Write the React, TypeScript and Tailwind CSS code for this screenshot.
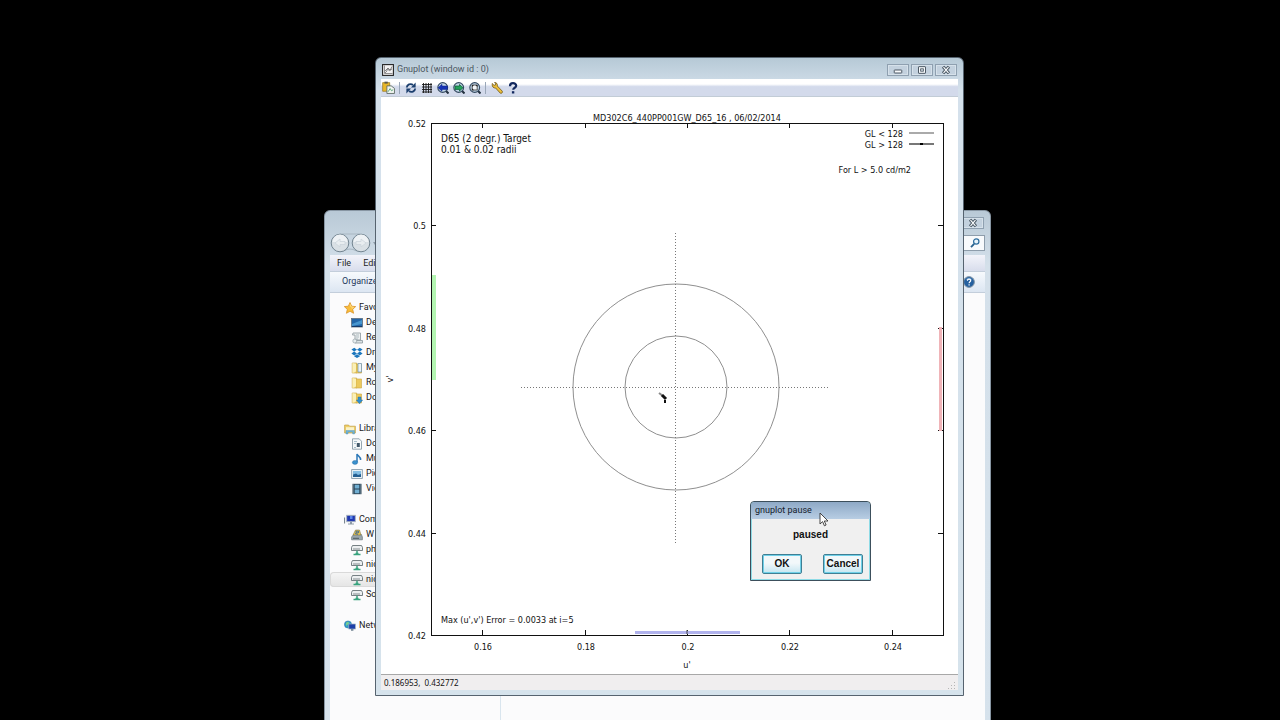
import React from 'react';

const UI_FONT = "font-['Roboto','Noto_Sans',sans-serif]";

// ---------------------------------------------------------------- icons

interface IconProps {
  className?: string;
  children?: React.ReactNode;
}

function Icon({ className = 'size-3', children }: IconProps) {
  return (
    <svg viewBox="0 0 12 12" className={`block shrink-0 ${className}`} fill="none" aria-hidden="true">
      {children}
    </svg>
  );
}

const StarIcon = () => (
  <Icon>
    <path d="M6 .5 7.7 4.2l4 .4-3 2.7.9 4L6 9.3l-3.6 2 .9-4-3-2.7 4-.4z" fill="#f9bd3a" stroke="#d48a1c" strokeWidth=".7" />
    <path d="M6 2.2 7 5l2.6.3-2 1.6" stroke="#ffe79a" strokeWidth=".7" />
  </Icon>
);

const DesktopIcon = () => (
  <Icon>
    <rect x=".5" y="1.5" width="11" height="8.5" fill="#2265a8" stroke="#5d6f80" strokeWidth=".8" />
    <path d="M1 7 11 3v4L1 9z" fill="#4796cf" />
    <path d="M1 9.5h10" stroke="#173a66" />
  </Icon>
);

const RecentIcon = () => (
  <Icon>
    <path d="M2 1h7.5v7H4V3H1.5z" fill="#eef1f2" stroke="#8b979d" strokeWidth=".8" />
    <path d="M5 3h3M5 5h3M5 7h2" stroke="#93a5ae" strokeWidth=".7" />
    <path d="M4 8.5h7.5V11H4z" fill="#dbe2e5" stroke="#8b979d" strokeWidth=".8" />
    <circle cx="3.8" cy="9" r="2" fill="#e6ecee" stroke="#8b979d" strokeWidth=".6" />
  </Icon>
);

const DropboxIcon = () => (
  <Icon>
    <path d="M3.3.8 6 2.7 3.1 4.6.4 2.6zM8.7.8 6 2.7l2.9 1.9 2.7-2zM.4 6.5l2.7-1.9L6 6.5 3.3 8.4zM11.6 6.5 8.9 4.6 6 6.5l2.7 1.9zM3 9.2l3-2 3 2-3 1.9z" fill="#1c76bd" />
  </Icon>
);

const FolderIcon = ({ badge }: { badge?: 'doc' | 'down' }) => (
  <Icon>
    <path d="M1.2 1h4.5v10H1.2z" fill="#f5df86" stroke="#c9a542" strokeWidth=".6" />
    <path d="M5 2h5.5v9H5z" fill="#ecc95c" stroke="#c9a542" strokeWidth=".6" />
    <path d="M1.5 11 5 9.5V2L1.5 1z" fill="#fbf0b6" />
    {badge === 'doc' && <path d="M7 1.5h3.5v8.5H7z" fill="#e9f1f7" stroke="#6b8fae" strokeWidth=".7" />}
    {badge === 'down' && <path d="M7 5h3v3h1.7L8.5 11.7 5.3 8H7z" fill="#2f8fce" stroke="#26659a" strokeWidth=".4" />}
  </Icon>
);

const LibraryIcon = () => (
  <Icon>
    <path d="M.6 2h4l1 1.2h5.8V10H.6z" fill="#f0cf68" stroke="#b99639" strokeWidth=".6" />
    <path d="M2 4.2h8v4H2z" fill="#fbf3c8" />
    <path d="M2 11V7.5h8.5V11H8.7V9H4v2z" fill="#70b3d5" stroke="#4b8db1" strokeWidth=".4" />
  </Icon>
);

const DocumentIcon = () => (
  <Icon>
    <path d="M1.5.8h6.7l2.3 2.4v8H1.5z" fill="#f6f9fa" stroke="#7e929e" strokeWidth=".8" />
    <path d="M3 3.5h3M3 5.5h2M3 9.5h2" stroke="#87a6b6" strokeWidth=".7" />
    <path d="M5.8 5h3v4h-3z" fill="#41586a" />
  </Icon>
);

const MusicIcon = () => (
  <Icon>
    <path d="M6 9V1c.6 2 3.8 2.3 3.6 6" stroke="#2c78b8" strokeWidth="1.5" />
    <ellipse cx="4" cy="9.4" rx="2.7" ry="2" fill="#3a90cc" stroke="#2467a1" strokeWidth=".4" />
  </Icon>
);

const PictureIcon = () => (
  <Icon>
    <path d="M.6 1.5h10.8v9H.6z" fill="#eaf2f7" stroke="#7d92a2" strokeWidth=".8" />
    <path d="M2 3h8v6H2z" fill="#83bde3" />
    <path d="m2 9 .1-2.5 3-1L7 7l3-1v3z" fill="#235f92" />
  </Icon>
);

const VideoIcon = () => (
  <Icon>
    <path d="M1.5.8h9v10.4h-9z" fill="#2c4456" />
    <path d="M3.7 1.8h4.6v3.6H3.7zM3.7 6.6h4.6v3.6H3.7z" fill="#70aed2" />
    <path d="M2.5 1.5v9M9.5 1.5v9" stroke="#9bb3c2" strokeWidth=".7" strokeDasharray="1 1" />
  </Icon>
);

const ComputerIcon = () => (
  <Icon>
    <path d="M.5 3.5v6" stroke="#7b8791" strokeWidth="1.2" />
    <rect x="2.7" y="1.3" width="8.6" height="6.4" fill="#2038b0" stroke="#a9b4be" strokeWidth=".9" />
    <path d="M6 2h2.5v3H6z" fill="#5c86ea" />
    <path d="M6 8h2v1.5h2v1H4v-1h2z" fill="#8e9ba5" />
  </Icon>
);

const DiskIcon = () => (
  <Icon>
    <path d="m.6 8 2-2.5h7.8l1 2.5v2.8H.6z" fill="#9aa7ac" stroke="#5d696f" strokeWidth=".6" />
    <path d="M2 6 4.5 1h4L10 6z" fill="#e8c654" stroke="#6d6433" strokeWidth=".5" />
    <path d="M5 2.2h2.5v1.6H5zM4 4.5l3 .8" stroke="#2b5d97" strokeWidth=".8" />
    <path d="M2 9.3h6" stroke="#3a474c" strokeWidth=".8" />
  </Icon>
);

const NetDriveIcon = () => (
  <Icon>
    <path d="M1.5 1.500h9l1 2v3H.5v-3z" fill="#eceff0" stroke="#687376" strokeWidth=".9" />
    <path d="M2 5h7" stroke="#6d777a" strokeWidth=".8" />
    <path d="M6 6.8v2.4M2.5 10.500h7M4.500 9.500h3" stroke="#38a37e" strokeWidth="1.500" />
  </Icon>
);

const NetworkIcon = () => (
  <Icon>
    <circle cx="4" cy="4.5" r="3.6" fill="#319bc9" stroke="#1f6fa0" strokeWidth=".5" />
    <path d="M2 3c1-1.5 3-1.2 3 0S3 5 2.3 6z" fill="#7bd08b" />
    <rect x="4.8" y="4" width="6.6" height="5" fill="#1c3fa8" stroke="#9fb2c2" strokeWidth=".7" />
    <path d="M7 9h2.4v1.8H7z" fill="#7a8b98" />
  </Icon>
);

const CloseGlyph = () => (
  <Icon className="size-[10px]">
    <path d="m2.5 2 7 8m0-8-7 8" stroke="#3f4c58" strokeWidth="3.6" />
    <path d="m3 2.6 6 6.8m0-6.8L3 9.4" stroke="#f7fafc" strokeWidth="1.6" />
  </Icon>
);

const MinimizeGlyph = () => (
  <Icon className="size-[10px]">
    <rect x="1.5" y="6" width="9" height="3.6" rx=".5" fill="#f7fafc" stroke="#3f4c58" strokeWidth="1.1" />
  </Icon>
);

const RestoreGlyph = () => (
  <Icon className="size-[10px]">
    <rect x="1.8" y="2" width="8.4" height="8" rx=".5" fill="#f7fafc" stroke="#3f4c58" strokeWidth="1.1" />
    <rect x="4.4" y="4.6" width="3.2" height="2.8" fill="#dce5ed" stroke="#3f4c58" strokeWidth="1" />
  </Icon>
);

const PlotIcon = () => (
  <Icon>
    <rect x=".6" y=".6" width="10.8" height="10.8" fill="#f4f4f4" stroke="#222" strokeWidth="1.1" />
    <path d="M2.500 1.500v8h8" stroke="#777" strokeWidth=".8" />
    <path d="M3 9c2-1 2-4 3-4S7 8 8 6.500 9.500 3 10 2.500M3 7l3-3 2 2 2-1" stroke="#555" strokeWidth=".7" />
  </Icon>
);

const CopyIcon = () => (
  <Icon className="size-[13px]">
    <path d="M.6 1.500h6.500v8H.6z" fill="#e9b829" stroke="#8d6d12" strokeWidth=".6" />
    <path d="M2.300.6h3v1.800h-3z" fill="#5d5a4b" />
    <path d="M4.500 4.500h4l3 2.300v4.700h-7z" fill="#f3f6f2" stroke="#596660" strokeWidth=".8" />
    <path d="m5.500 10 2-3 1.300 2 1.500-1" stroke="#4a9f6b" strokeWidth=".8" />
  </Icon>
);

const ReplotIcon = () => (
  <Icon>
    <path d="M1.800 5.500C2 2.800 5.500 1 8 3" stroke="#1c3f6e" strokeWidth="1.900" />
    <path d="M10.600.5v5H6z" fill="#1c3f6e" />
    <path d="M10.200 6.500C10 9.200 6.500 11 4 9" stroke="#1c3f6e" strokeWidth="1.900" />
    <path d="M1.400 11.500v-5H6z" fill="#1c3f6e" />
  </Icon>
);

const GridIcon = () => (
  <Icon>
    <path d="M2.500 1v10M5 1v10M7.500 1v10M10 1v10M1 2.500h10M1 5h10M1 7.500h10M1 10h10" stroke="#1a1a1a" strokeWidth=".9" />
  </Icon>
);

const ZoomIcon = ({ kind }: { kind: 'prev' | 'next' | 'auto' }) => (
  <Icon>
    <path d="m8.500 8.500 3 3" stroke="#23303f" strokeWidth="2" />
    <circle cx="5.700" cy="5.500" r="4.900" fill="#c3d8ea" stroke="#34495f" strokeWidth="1.100" />
    {kind === 'prev' && <path d="m1 5.700 4-3.500v1.800h5.500v3.400H5v1.800z" fill="#1733b4" stroke="#0d2384" strokeWidth=".5" />}
    {kind === 'next' && <path d="M10 5.700 6.500 2.500v1.500H2v3.400h4.500v1.600z" fill="#23a25b" stroke="#12633a" strokeWidth=".8" />}
    {kind === 'auto' && (
      <>
        <path d="M3.200 3h5v5h-5z" fill="#f4f6f8" stroke="#333" strokeWidth=".8" />
        <path d="M3 3h2L3 5zM8.400 3h-2l2 2zM3 8.200v-2l2 2z" fill="#222" />
      </>
    )}
  </Icon>
);

const WrenchIcon = () => (
  <Icon>
    <path d="M1.200 1.500 3 3.300 4.500 3 4.800 1.200 3.500.6C5.500.3 6.800 2 6.300 4l5 5.200c.5 1.500-.8 2.600-2 2L4.600 6C2.500 6.300 1 4.500 1.200 2.500z" fill="#edc03a" stroke="#6d5618" strokeWidth=".8" />
  </Icon>
);

const HelpGlyph = () => (
  <Icon>
    <path d="M3 4.200C3 1.800 4.200 1.200 6 1.200s3.200.8 3.200 2.600c0 2-3 1.900-3 4" stroke="#12295f" strokeWidth="2.200" />
    <rect x="4.900" y="9.200" width="2.400" height="2.300" fill="#12295f" />
  </Icon>
);

const SearchIcon = () => (
  <Icon className="size-[10px]">
    <path d="M5 7 1.200 11" stroke="#29628e" strokeWidth="2.200" />
    <circle cx="7.500" cy="4.200" r="3.200" fill="#e8f4fb" stroke="#2f6f9f" strokeWidth="1.500" />
  </Icon>
);

const HelpBallIcon = () => (
  <Icon>
    <circle cx="6" cy="6" r="5.400" fill="#25609f" stroke="#8598a8" strokeWidth="1" />
    <path d="M2.500 3.500a4.500 3.500 0 0 1 7 0z" fill="#78a9d6" />
    <path d="M4.400 4.800c0-2.400 3.300-2.200 3.300-.3 0 1.300-1.600 1.200-1.600 2.700M6.100 8.200v1.300" stroke="#fff" strokeWidth="1.200" />
  </Icon>
);

const NavArrows = () => (
  <svg viewBox="0 0 48 20" className="h-5 w-12 shrink-0" fill="none" aria-hidden="true">
    <path d="M10 1h20M10 18c5 1 5-2 10-2s5 3 10 2" stroke="#a9b7c2" />
    {[10, 31].map((cx) => (
      <g key={cx}>
        <circle cx={cx} cy="10" r="8.800" fill="#d9e0e5" stroke="#738591" />
        <path d={`M${cx - 7.500} 9a7.500 7.500 0 0 1 15 0z`} fill="#eef2f5" />
      </g>
    ))}
    <path d="M5 10l5-4v2.500h5v3h-5V14zM36 10l-5-4v2.500h-5v3h5V14z" fill="#e8edf0" stroke="#cbd4da" strokeWidth=".8" />
    <path d="M43 9h4l-2 3z" fill="#8d9ba7" />
  </svg>
);

// ---------------------------------------------------------------- explorer window

interface Place {
  label: string;
  icon: React.ReactNode;
  selected?: boolean;
}

const PLACES: { head: Place; items: Place[] }[] = [
  {
    head: { label: 'Favorites', icon: <StarIcon /> },
    items: [
      { label: 'Desktop', icon: <DesktopIcon /> },
      { label: 'Recent', icon: <RecentIcon /> },
      { label: 'Dropbox', icon: <DropboxIcon /> },
      { label: 'My', icon: <FolderIcon badge="doc" /> },
      { label: 'Ro', icon: <FolderIcon /> },
      { label: 'Do', icon: <FolderIcon badge="down" /> },
    ],
  },
  {
    head: { label: 'Libraries', icon: <LibraryIcon /> },
    items: [
      { label: 'Documents', icon: <DocumentIcon /> },
      { label: 'Music', icon: <MusicIcon /> },
      { label: 'Pictures', icon: <PictureIcon /> },
      { label: 'Videos', icon: <VideoIcon /> },
    ],
  },
  {
    head: { label: 'Computer', icon: <ComputerIcon /> },
    items: [
      { label: 'W', icon: <DiskIcon /> },
      { label: 'ph', icon: <NetDriveIcon /> },
      { label: 'nic', icon: <NetDriveIcon /> },
      { label: 'nic', icon: <NetDriveIcon />, selected: true },
      { label: 'So', icon: <NetDriveIcon /> },
    ],
  },
  { head: { label: 'Network', icon: <NetworkIcon /> }, items: [] },
];

function WindowButton({ label, children }: { label: string; children: React.ReactNode }) {
  return (
    <button
      type="button"
      aria-label={label}
      className="flex h-3 w-[22px] items-center justify-center border border-[#8fa0b0] bg-[#c3d1de] shadow-[inset_0_0_0_1px_#d6e1ea]"
    >
      {children}
    </button>
  );
}

function ExplorerWindow() {
  return (
    <section
      aria-label="Explorer"
      className="absolute top-[210px] left-[324px] flex h-[540px] w-[667px] flex-col rounded-t-md border border-[#8896a3] bg-linear-to-b from-[#b9c9d6] via-[#d4e0ea] via-10% to-[#d6e2ec] px-[5px]"
    >
      <div className="flex h-[19px] items-center justify-end pt-1 pr-px">
        <WindowButton label="Close explorer">
          <CloseGlyph />
        </WindowButton>
      </div>
      <div className="flex h-[25px] items-center justify-between">
        <button type="button" aria-label="Back and forward">
          <NavArrows />
        </button>
        <label className="flex h-4 w-32 items-center border border-[#8e9dab] bg-[#f8fafc] pr-1">
          <input aria-label="Search" className="min-w-0 flex-1 bg-transparent text-[9px] outline-none" />
          <SearchIcon />
        </label>
      </div>
      <nav className="flex h-4 items-center gap-3 bg-linear-to-b from-[#f3f4fa] to-[#d8ddec] px-[7px] pt-px text-[9px] text-[#1e1e1e]">
        <button type="button">File</button>
        <button type="button">Edit</button>
      </nav>
      <div className="flex h-[22px] items-center justify-between border-y border-[#c3cedb] bg-linear-to-b from-[#f7fafd] to-[#dce6f2] pr-[10px] pl-3 text-[9px] text-[#1e395b]">
        <button type="button">Organize</button>
        <button type="button" aria-label="Explorer help">
          <HelpBallIcon />
        </button>
      </div>
      <div className="flex min-h-0 flex-1 bg-[#fbfbfc]">
        <aside className="flex w-[171px] flex-col gap-4 border-r border-[#d9e5ee] pt-[7px] text-[9px] text-[#1a1a1a]">
          {PLACES.map(({ head, items }) => (
            <div key={head.label}>
              <div className="flex h-[15px] items-center gap-[3px] pl-[14px]">
                {head.icon}
                <span>{head.label}</span>
              </div>
              {items.map((item, i) => (
                <div
                  key={i}
                  className={`flex h-[15px] items-center gap-[3px] rounded-sm pl-[21px] ${
                    item.selected ? 'bg-linear-to-b from-[#f6f6f6] to-[#e4e4e4] ring-1 ring-[#d9d9d9] ring-inset' : ''
                  }`}
                >
                  {item.icon}
                  <span>{item.label}</span>
                </div>
              ))}
            </div>
          ))}
        </aside>
      </div>
    </section>
  );
}

// ---------------------------------------------------------------- chart

const PLOT = { left: 50, top: 26, right: 562, bottom: 538 };
const sx = (u: number) => Math.round(PLOT.left + ((u - 0.15) / 0.1) * (PLOT.right - PLOT.left));
const sy = (v: number) => Math.round(PLOT.top + ((0.52 - v) / 0.1) * (PLOT.bottom - PLOT.top));

const U_TICKS = [0.16, 0.18, 0.2, 0.22, 0.24];
const V_TICKS = [0.52, 0.5, 0.48, 0.46, 0.44, 0.42];
const TARGET = { x: 295, y: 290 };

function Chart() {
  return (
    <svg
      viewBox="0 0 577 577"
      className="block w-full bg-white font-['DejaVu_Sans_Condensed','DejaVu_Sans',sans-serif] text-[9px]"
      role="img"
      aria-label="u' v' chromaticity plot"
    >
      <g stroke="#111" fill="none" shapeRendering="crispEdges">
        <rect x={PLOT.left} y={PLOT.top} width={PLOT.right - PLOT.left} height={PLOT.bottom - PLOT.top} />
        {U_TICKS.map((u) => (
          <path key={u} d={`M${sx(u)} ${PLOT.top}v5M${sx(u)} ${PLOT.bottom}v-5`} />
        ))}
        {V_TICKS.map((v) => (
          <path key={v} d={`M${PLOT.left} ${sy(v)}h5M${PLOT.right} ${sy(v)}h-5`} />
        ))}
      </g>

      {/* tolerance bars */}
      <rect x="51" y="178" width="4" height="105" fill="#b3f5b1" />
      <rect x="558" y="230" width="3" height="104" fill="#f0b4b8" />
      <rect x="254" y="534" width="105" height="3" fill="#b0b2ec" />
      <path d="M306 533v4" stroke="#444" />

      {/* target */}
      <g fill="none" stroke="#8f8f8f">
        <circle cx={TARGET.x} cy={TARGET.y} r="51" />
        <circle cx={TARGET.x} cy={TARGET.y} r="103" />
        <path d="M140 290.500h307M294.500 136v310" stroke="#777" strokeDasharray="1 2" />
      </g>
      <path d="M278 296l4 3" stroke="#888" strokeWidth="2" />
      <path d="M281 298l4 4" stroke="#111" strokeWidth="3" />
      <path d="M283 303h2v3h-2z" fill="#111" />

      {/* legend samples */}
      <path d="M528 36h25" stroke="#aaa" strokeWidth="2" />
      <path d="M528 47h25" stroke="#777" strokeWidth="2" />
      <path d="M539 47h3" stroke="#000" strokeWidth="2" />

      <g fill="#111">
        <text x="306" y="24" textAnchor="middle">MD302C6_440PP001GW_D65_16 , 06/02/2014</text>
        <text x="60" y="45" className="text-[10px]">D65 (2 degr.) Target</text>
        <text x="60" y="56" className="text-[10px]">0.01 &amp; 0.02 radii</text>
        <text x="522" y="40" textAnchor="end">GL &lt; 128</text>
        <text x="522" y="51" textAnchor="end">GL &gt; 128</text>
        <text x="530" y="76" textAnchor="end">For L &gt; 5.0 cd/m2</text>
        <text x="60" y="526">Max (u',v') Error = 0.0033 at i=5</text>
        {V_TICKS.map((v) => (
          <text key={v} x="45" y={sy(v) + 4} textAnchor="end">{v}</text>
        ))}
        {U_TICKS.map((u) => (
          <text key={u} x={sx(u) + 1} y="553" textAnchor="middle">{u}</text>
        ))}
        <text x="306" y="571" textAnchor="middle">u'</text>
        <text transform="translate(12 282) rotate(-90)" textAnchor="middle">v'</text>
      </g>
    </svg>
  );
}

// ---------------------------------------------------------------- gnuplot window

const TOOLS: { label: string; icon: React.ReactNode; divider?: boolean }[] = [
  { label: 'Copy to clipboard', icon: <CopyIcon />, divider: true },
  { label: 'Replot', icon: <ReplotIcon /> },
  { label: 'Toggle grid', icon: <GridIcon /> },
  { label: 'Previous zoom', icon: <ZoomIcon kind="prev" /> },
  { label: 'Next zoom', icon: <ZoomIcon kind="next" /> },
  { label: 'Autoscale', icon: <ZoomIcon kind="auto" />, divider: true },
  { label: 'Configure', icon: <WrenchIcon /> },
  { label: 'Help', icon: <HelpGlyph /> },
];

function GnuplotWindow() {
  return (
    <section
      aria-label="Gnuplot"
      className="absolute top-[57px] left-[375px] w-[589px] rounded-t-md border border-[#56636f] bg-linear-to-b from-[#b6c9d6] via-[#d5e1ec] via-5% to-[#d6e3ec] px-[5px] pb-[5px]"
    >
      <header className="flex h-[21px] items-center gap-[3px] px-px pt-[3px]">
        <PlotIcon />
        <h1 className="flex-1 text-[9px] text-[#4b5660]">Gnuplot (window id : 0)</h1>
        <div className="flex gap-[2px]">
          <WindowButton label="Minimize"><MinimizeGlyph /></WindowButton>
          <WindowButton label="Restore"><RestoreGlyph /></WindowButton>
          <WindowButton label="Close"><CloseGlyph /></WindowButton>
        </div>
      </header>
      <div className="flex h-[18px] items-center gap-1 border-b border-[#c2ccd6] bg-linear-to-b from-white from-30% to-[#d3daeb] to-45% pl-px">
        {TOOLS.map((tool) => (
          <React.Fragment key={tool.label}>
            <button type="button" aria-label={tool.label}>{tool.icon}</button>
            {tool.divider && <span className="mr-px h-3 w-px bg-[#9aa7b8]" />}
          </React.Fragment>
        ))}
      </div>
      <Chart />
      <footer className="flex h-4 items-center justify-between border-t border-[#a8a8a8] bg-[#f0eeef] pl-[3px] font-['Noto_Sans',sans-serif] text-[8px] text-[#111]">
        <span className="whitespace-pre">0.186953,  0.432772</span>
        <svg viewBox="0 0 10 10" className="size-[10px] self-end" aria-hidden="true">
          <path d="M6 2h1v1H6zM6 5h1v1H6zM6 8h1v1H6zM3 5h1v1H3zM3 8h1v1H3zM0 8h1v1H0z" fill="#b5b5b5" />
        </svg>
      </footer>
    </section>
  );
}

// ---------------------------------------------------------------- pause dialog

function PauseButton({ children }: { children: React.ReactNode }) {
  return (
    <button
      type="button"
      className="h-5 w-10 rounded-xs border border-[#3f7f94] bg-linear-to-b from-[#f2f8fa] from-45% to-[#c5e6f1] shadow-[inset_0_0_0_1px_#6fd0e8]"
    >
      {children}
    </button>
  );
}

function PauseDialog() {
  return (
    <section
      role="dialog"
      aria-label="gnuplot pause"
      className="absolute top-[501px] left-[750px] w-[121px] rounded-t-sm border border-[#3c4f5c] bg-[#f0f0f0] shadow-[inset_0_0_0_1px_#8edbe6]"
    >
      <h2 className="flex h-[17px] items-center rounded-t-sm bg-linear-to-b from-[#8ea9c6] to-[#b8cde3] px-1 text-[9px] text-[#14202c]">
        gnuplot pause
      </h2>
      <div className="px-[11px] pb-[6px] font-['Liberation_Sans',sans-serif] text-[10px] leading-[12px] font-bold text-[#111]">
        <p className="pt-[10px] pb-[13px] text-center">paused</p>
        <div className="-mr-1 flex justify-between">
          <PauseButton>OK</PauseButton>
          <PauseButton>Cancel</PauseButton>
        </div>
      </div>
    </section>
  );
}

export default function App() {
  return (
    <main className={`relative h-screen overflow-hidden bg-black ${UI_FONT}`}>
      <ExplorerWindow />
      <GnuplotWindow />
      <PauseDialog />
      <svg viewBox="0 0 10 15" className="absolute top-[512px] left-[819px] h-[15px] w-[10px]" aria-hidden="true">
        <path d="M1 1v11l2.600-2.400 1.800 4.200 1.700-.8-1.800-4H9z" fill="#fff" stroke="#333" strokeWidth=".9" />
      </svg>
    </main>
  );
}
